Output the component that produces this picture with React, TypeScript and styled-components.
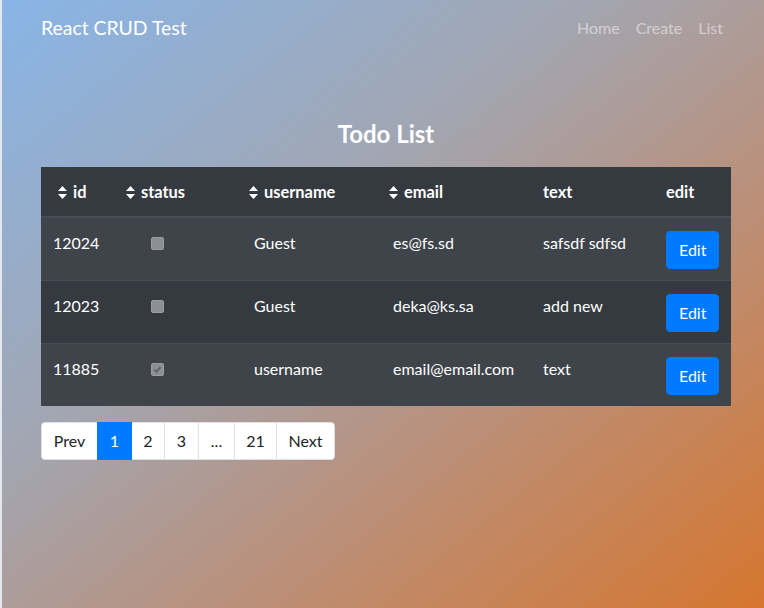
import React from "react";
import styled, { createGlobalStyle } from "styled-components";

const GlobalStyle = createGlobalStyle`
  html, body {
    margin: 0;
    padding: 0;
    height: 100%;
  }
  body {
    font-family: "Segoe UI", Lato, "Noto Sans", "Liberation Sans", sans-serif;
    font-size: 16px;
    line-height: 1.5;
    color: #212529;
  }
  #root {
    min-height: 100%;
  }
`;

const Page = styled.div`
  min-height: 100vh;
  box-sizing: border-box;
  border-left: 2px solid #e4e8ee;
  background: linear-gradient(
    to bottom right,
    #88b5e7 0%,
    #a2a6b2 38%,
    #bb8f78 66%,
    #d6762f 100%
  );
`;

const Container = styled.div`
  width: 690px;
  margin-left: 39px;
`;

const Navbar = styled.nav`
  display: flex;
  align-items: center;
  justify-content: space-between;
  height: 56px;
`;

const Brand = styled.a`
  font-size: 19.4px;
  color: #fff;
  text-decoration: none;
  line-height: 30px;
`;

const NavLinks = styled.ul`
  display: flex;
  list-style: none;
  margin: 0;
  padding: 0;
`;

const NavLink = styled.li`
  padding: 8px;
  color: rgba(255, 255, 255, 0.5);
  font-size: 16px;
`;

const Title = styled.h3`
  margin: 64px 0 18px;
  text-align: center;
  font-size: 24px;
  font-weight: 700;
  line-height: 1.2;
  color: #fff;
`;

const Table = styled.table`
  width: 690px;
  border-collapse: collapse;
  table-layout: fixed;
  background: #343a40;
  color: #fff;
  margin-bottom: 16px;
`;

const Th = styled.th<{ w: number; pad: number }>`
  width: ${({ w }) => w}px;
  box-sizing: border-box;
  text-align: left;
  padding: 13px 4px 12px ${({ pad }) => pad}px;
  font-size: 16.4px;
  font-weight: 700;
  border-bottom: 2px solid #454d55;
  white-space: nowrap;
  vertical-align: middle;
`;

const Tr = styled.tr<{ striped: boolean }>`
  background: ${({ striped }) => (striped ? "rgba(255,255,255,0.05)" : "transparent")};
  border-top: 1px solid #454d55;
`;

const Td = styled.td<{ pad?: number }>`
  padding: 13px 12px 11px ${({ pad }) => pad ?? 12}px;
  vertical-align: top;
  white-space: nowrap;
`;

const SortIcon = styled.svg`
  width: 9px;
  height: 13px;
  margin-right: 6px;
  vertical-align: -1px;
`;

const Check = styled.span`
  display: inline-block;
  width: 13px;
  height: 13px;
  margin-top: 6px;
  border-radius: 2px;
  background: #8c8f94;
  border: 1px solid #9a9da1;
  box-sizing: border-box;
  position: relative;
  vertical-align: top;
`;

const EditButton = styled.button`
  display: block;
  font-family: inherit;
  font-size: 16px;
  line-height: 24px;
  padding: 6px 12px;
  color: #fff;
  background: #007bff;
  border: 1px solid #007bff;
  border-radius: 4px;
  cursor: pointer;
`;

const Pagination = styled.ul`
  display: flex;
  list-style: none;
  margin: 0;
  padding: 0;
`;

const PageItem = styled.li<{ w: number; active?: boolean; first?: boolean; last?: boolean }>`
  box-sizing: border-box;
  width: ${({ w }) => w + 1}px;
  text-align: center;
  padding: 6px 0;
  line-height: 24px;
  font-size: 16px;
  background: ${({ active }) => (active ? "#007bff" : "#fff")};
  color: ${({ active }) => (active ? "#fff" : "#212529")};
  border: 1px solid ${({ active }) => (active ? "#007bff" : "#dee2e6")};
  margin-left: ${({ first }) => (first ? 0 : -1)}px;
  border-radius: ${({ first, last }) =>
    first ? "4px 0 0 4px" : last ? "0 4px 4px 0" : "0"};
  position: relative;
  z-index: ${({ active }) => (active ? 1 : 0)};
`;

const Sort = () => (
  <SortIcon viewBox="0 0 9 13">
    <path d="M4.5 0 L9 5 H0 Z" fill="#fff" />
    <path d="M4.5 13 L9 8 H0 Z" fill="#fff" />
  </SortIcon>
);

const CheckMark = () => (
  <svg
    width="9"
    height="9"
    viewBox="0 0 9 9"
    style={{ position: "absolute", left: 1, top: 1 }}
  >
    <path d="M1.5 4.8 L3.5 6.8 L7.5 2.2" stroke="#5c6066" strokeWidth="1.8" fill="none" />
  </svg>
);

const columns = [
  { label: "id", w: 73, pad: 17, sort: true },
  { label: "status", w: 128, pad: 12, sort: true },
  { label: "username", w: 139, pad: 7, sort: true },
  { label: "email", w: 150, pad: 8, sort: true },
  { label: "text", w: 123, pad: 12, sort: false },
  { label: "edit", w: 77, pad: 12, sort: false },
];

const todos = [
  { id: 12024, done: false, username: "Guest", email: "es@fs.sd", text: "safsdf sdfsd" },
  { id: 12023, done: false, username: "Guest", email: "deka@ks.sa", text: "add new" },
  { id: 11885, done: true, username: "username", email: "email@email.com", text: "text" },
];

const pages = [
  { label: "Prev", w: 56 },
  { label: "1", w: 34 },
  { label: "2", w: 33 },
  { label: "3", w: 34 },
  { label: "...", w: 36 },
  { label: "21", w: 42 },
  { label: "Next", w: 58 },
];

export default function App() {
  return (
    <>
      <GlobalStyle />
      <Page>
        <Container>
          <Navbar>
            <Brand>React CRUD Test</Brand>
            <NavLinks>
              <NavLink>Home</NavLink>
              <NavLink>Create</NavLink>
              <NavLink>List</NavLink>
            </NavLinks>
          </Navbar>
          <Title>Todo List</Title>
          <Table>
            <thead>
              <tr>
                {columns.map((c) => (
                  <Th key={c.label} w={c.w} pad={c.pad}>
                    {c.sort && <Sort />}
                    {c.label}
                  </Th>
                ))}
              </tr>
            </thead>
            <tbody>
              {todos.map((t, i) => (
                <Tr key={t.id} striped={i % 2 === 0}>
                  <Td>{t.id}</Td>
                  <Td pad={37}>
                    <Check>{t.done && <CheckMark />}</Check>
                  </Td>
                  <Td>{t.username}</Td>
                  <Td>{t.email}</Td>
                  <Td>{t.text}</Td>
                  <Td>
                    <EditButton>Edit</EditButton>
                  </Td>
                </Tr>
              ))}
            </tbody>
          </Table>
          <Pagination>
            {pages.map((p, i) => (
              <PageItem
                key={p.label}
                w={p.w}
                active={p.label === "1"}
                first={i === 0}
                last={i === pages.length - 1}
              >
                {p.label}
              </PageItem>
            ))}
          </Pagination>
        </Container>
      </Page>
    </>
  );
}
